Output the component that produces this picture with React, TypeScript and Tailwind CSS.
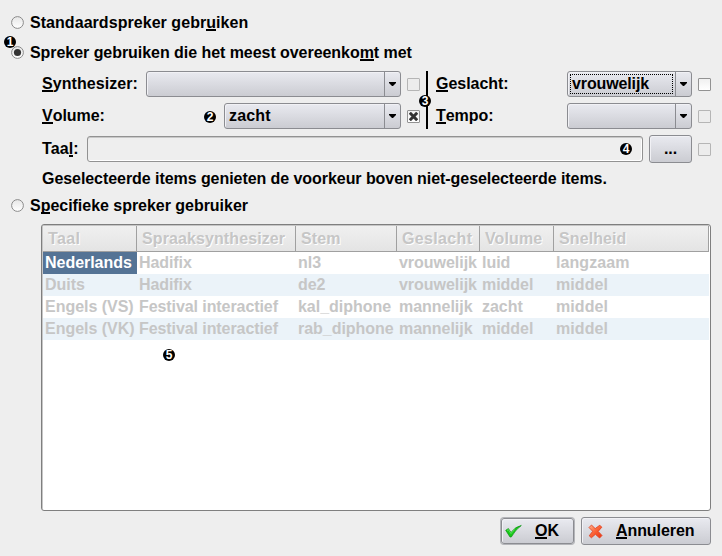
import type { ReactNode } from "react";

const metal = "border border-[#8b8c91] rounded-[3px] bg-linear-to-b from-[#e9eaf0] to-[#cbccd2]";
const bevel = "shadow-[inset_1px_1px_0_#f1f1f5]";

function Radio({ on = false }: { on?: boolean }) {
  return (
    <svg className="mt-[5px] mr-[6px] h-[13px] w-[13px] shrink-0" viewBox="0 0 13 13">
      <defs>
        <linearGradient id="radio" x1="0" y1="0" x2="0" y2="1">
          <stop offset="0" stopColor="#e6e6e6" />
          <stop offset="1" stopColor="#ffffff" />
        </linearGradient>
      </defs>
      <circle cx="6.5" cy="6.5" r="5.9" fill="url(#radio)" stroke="#8a8a8a" strokeWidth="1" />
      {on && <circle cx="6.5" cy="6.5" r="3.6" fill="#333" />}
    </svg>
  );
}

function Check({ state = "off" }: { state?: "off" | "disabled" | "on" }) {
  return (
    <span
      className={
        "flex h-[13px] w-[13px] shrink-0 items-center justify-center rounded-[1px] border " +
        (state === "disabled" ? "border-[#b5b5b5] bg-[#ececec]" : "border-[#929292] bg-linear-to-b from-[#f0f0f0] to-white")
      }
    >
      {state === "on" && (
        <svg className="h-[9px] w-[9px] shrink-0" viewBox="0 0 9 9">
          <path d="M.8 .8 8.2 8.2M8.2 .8 .8 8.2" stroke="#333" strokeWidth="3" />
        </svg>
      )}
    </span>
  );
}

function Combo({ width, children, focus = false }: { width: string; children?: ReactNode; focus?: boolean }) {
  return (
    <div className={`flex h-[26px] shrink-0 ${width} ${metal} ${bevel}`}>
      <div className="flex flex-1 items-center p-[2px]">
        <div className={"flex h-full w-full items-center " + (focus ? "border border-dotted border-black pl-[1px]" : "pl-[2px]")}>
          {children}
        </div>
      </div>
      <div className="flex w-[16px] items-center justify-center border-l border-[#8b8c91]">
        <svg className="h-[4px] w-[7px]" viewBox="0 0 7 4">
          <path d="M0 0H7V1L4 4H3L0 1Z" fill="#000" />
        </svg>
      </div>
    </div>
  );
}

function Badge({ n, at }: { n: number; at: string }) {
  return (
    <span
      className={`absolute flex h-[12px] w-[12px] items-center justify-center rounded-full bg-black text-[12px] leading-[12px] font-bold tracking-normal text-white ${at}`}
    >
      {n}
    </span>
  );
}

function U({ children }: { children: string }) {
  return <span className="inline-block h-[15px] border-b-2 border-black leading-[14px]">{children}</span>;
}

const grid = "grid grid-cols-[94px_159px_101px_83px_74px_1fr]";
const heads = ["Taal", "Spraaksynthesizer", "Stem", "Geslacht", "Volume", "Snelheid"];
const rows = [
  ["Nederlands", "Hadifix", "nl3", "vrouwelijk", "luid", "langzaam"],
  ["Duits", "Hadifix", "de2", "vrouwelijk", "middel", "middel"],
  ["Engels (VS)", "Festival interactief", "kal_diphone", "mannelijk", "zacht", "middel"],
  ["Engels (VK)", "Festival interactief", "rab_diphone", "mannelijk", "middel", "middel"],
];

export default function App() {
  return (
    <div className="relative flex h-[556px] w-[722px] flex-col overflow-hidden bg-[#eeeeee] pr-[11px] pl-[11px] font-['Liberation_Sans',Arial,sans-serif] text-[16px] leading-[22px] font-bold tracking-[-0.03px] whitespace-nowrap text-black">
      <div className="mt-[11px] flex h-[22px] items-start">
        <Radio />
        <span className="mt-px tracking-[0.05px]">Standaardspreker gebr<U>u</U>iken</span>
      </div>
      <div className="mt-[8px] flex h-[22px] items-start">
        <Radio on />
        <span className="mt-px tracking-[-0.05px]">Spreker gebruiken die het meest overeenko<U>m</U>t met</span>
      </div>

      <div className="mt-[8px] flex h-[58px] pl-[31px]">
        <div className="flex w-[378px] flex-col gap-[6px]">
          <div className="flex items-center">
            <span className="flex-1 tracking-[0.06px]"><U>S</U>ynthesizer:</span>
            <Combo width="w-[255px]" />
            <span className="w-[6px]" />
            <Check state="disabled" />
          </div>
          <div className="flex items-center">
            <span className="flex-1"><U>V</U>olume:</span>
            <Combo width="w-[177px]"><span className="tracking-[0.15px]">zacht</span></Combo>
            <span className="w-[6px]" />
            <Check state="on" />
          </div>
        </div>
        <div className="ml-[6px] w-[2px] bg-black" />
        <div className="ml-[8px] flex flex-1 flex-col gap-[6px]">
          <div className="flex items-center">
            <span className="flex-1"><U>G</U>eslacht:</span>
            <Combo width="w-[125px]" focus><span className="tracking-[-0.12px]">vrouwelijk</span></Combo>
            <span className="w-[6px]" />
            <Check />
          </div>
          <div className="flex items-center">
            <span className="flex-1"><U>T</U>empo:</span>
            <Combo width="w-[125px]" />
            <span className="w-[6px]" />
            <Check state="disabled" />
          </div>
        </div>
      </div>

      <div className="mt-[6px] flex h-[28px] items-center pl-[31px]">
        <span className="w-[45px] tracking-[0.1px]">Taa<U>l</U>:</span>
        <div className="h-[26px] flex-1 rounded-[3px] border border-[#929292] shadow-[inset_0_1px_0_#c8c8c8,inset_-1px_-1px_0_#fff]" />
        <div className={`ml-[6px] flex h-[28px] w-[43px] items-center justify-center ${metal} ${bevel}`}>...</div>
        <span className="w-[6px]" />
        <Check state="disabled" />
      </div>
      <div className="mt-[5px] h-[22px] pl-[31px] tracking-[-0.06px]">Geselecteerde items genieten de voorkeur boven niet-geselecteerde items.</div>
      <div className="mt-[4px] flex h-[22px] items-start">
        <Radio />
        <span className="mt-px">S<U>p</U>ecifieke spreker gebruiker</span>
      </div>

      <div className="mt-[8px] ml-[30px] flex h-[287px] flex-col rounded-[3px] border border-[#7f7f7f] bg-white pr-px pl-px shadow-[inset_1px_1px_0_#c6c6c6]">
        <div className={`mt-px h-[26px] border-r border-b border-[#a0a0a0] bg-linear-to-b from-[#f0f0f0] to-[#e4e4e4] ${grid}`}>
          {heads.map((h, i) => (
            <div
              key={h}
              className={
                "flex items-center pl-[5px] text-[#c6c6c6] [text-shadow:1px_1px_0_#fff] " +
                (i === 3 || i === 0 ? "tracking-[0.35px] " : "tracking-[0.1px] ") +
                (i < 5 ? "border-r border-[#a0a0a0]" : "")
              }
            >
              {h}
            </div>
          ))}
        </div>
        {rows.map((r, i) => (
          <div key={i} className={`h-[22px] text-[#c6c6c6] ${grid} ${i % 2 ? "bg-[#ebf3f9]" : ""}`}>
            {r.map((c, j) => (
              <div
                key={j}
                className={
                  "pl-[2px] " +
                  (j === 1 ? "tracking-[-0.08px] " : j === 5 ? "tracking-[0.08px] " : "") +
                  (i === 0 && j === 0 ? "bg-[#547395] text-white" : "")
                }
              >
                {c}
              </div>
            ))}
          </div>
        ))}
      </div>

      <div className="mt-[6px] flex justify-end gap-[7px]">
        <div className={`my-px flex h-[26px] w-[73px] items-center pl-[3px] ${metal} shadow-[0_0_0_1px_#b4b5b9,inset_1px_1px_0_#f1f1f5]`}>
          <svg className="mr-[13px] h-[16px] w-[17px]" viewBox="0 0 17 16">
            <path d="M.7 7.3 3.4 5.6 6 9.5Q10.5 3.5 16.3 2.5 10.5 6.5 6.3 14H5Z" fill="#16c916" stroke="#0a8f12" strokeWidth=".7" />
            <path d="M2 7.5 3.4 6.6 6 10.6 9.5 6.5" fill="none" stroke="#6be86b" strokeWidth=".8" />
          </svg>
          <span><U>O</U>K</span>
        </div>
        <div className={`flex h-[28px] w-[130px] items-center pl-[6px] ${metal} ${bevel}`}>
          <svg className="mr-[13px] h-[15px] w-[15px]" viewBox="0 0 15 15">
            <defs>
              <linearGradient id="cross" x1="0" y1="0" x2="1" y2="1">
                <stop offset="0" stopColor="#ffb38f" />
                <stop offset=".5" stopColor="#fb6134" />
                <stop offset="1" stopColor="#e83310" />
              </linearGradient>
            </defs>
            <path d="M1 3.5 3.5 1 7.2 4.6 11.8 1.2 13.8 3.2 10.2 7.4 14 11.5 11.6 14 7.4 10.3 3.4 13.8 1.2 11.8 4.7 7.3Z" fill="url(#cross)" stroke="#df3b1c" strokeWidth=".8" strokeLinejoin="round" />
          </svg>
          <span className="tracking-[-0.08px]"><U>A</U>nnuleren</span>
        </div>
      </div>

      <Badge n={1} at="left-[4px] top-[36px]" />
      <Badge n={2} at="left-[204px] top-[111px]" />
      <Badge n={3} at="left-[419px] top-[95px]" />
      <Badge n={4} at="left-[620px] top-[143px]" />
      <Badge n={5} at="left-[163px] top-[349px]" />
    </div>
  );
}
